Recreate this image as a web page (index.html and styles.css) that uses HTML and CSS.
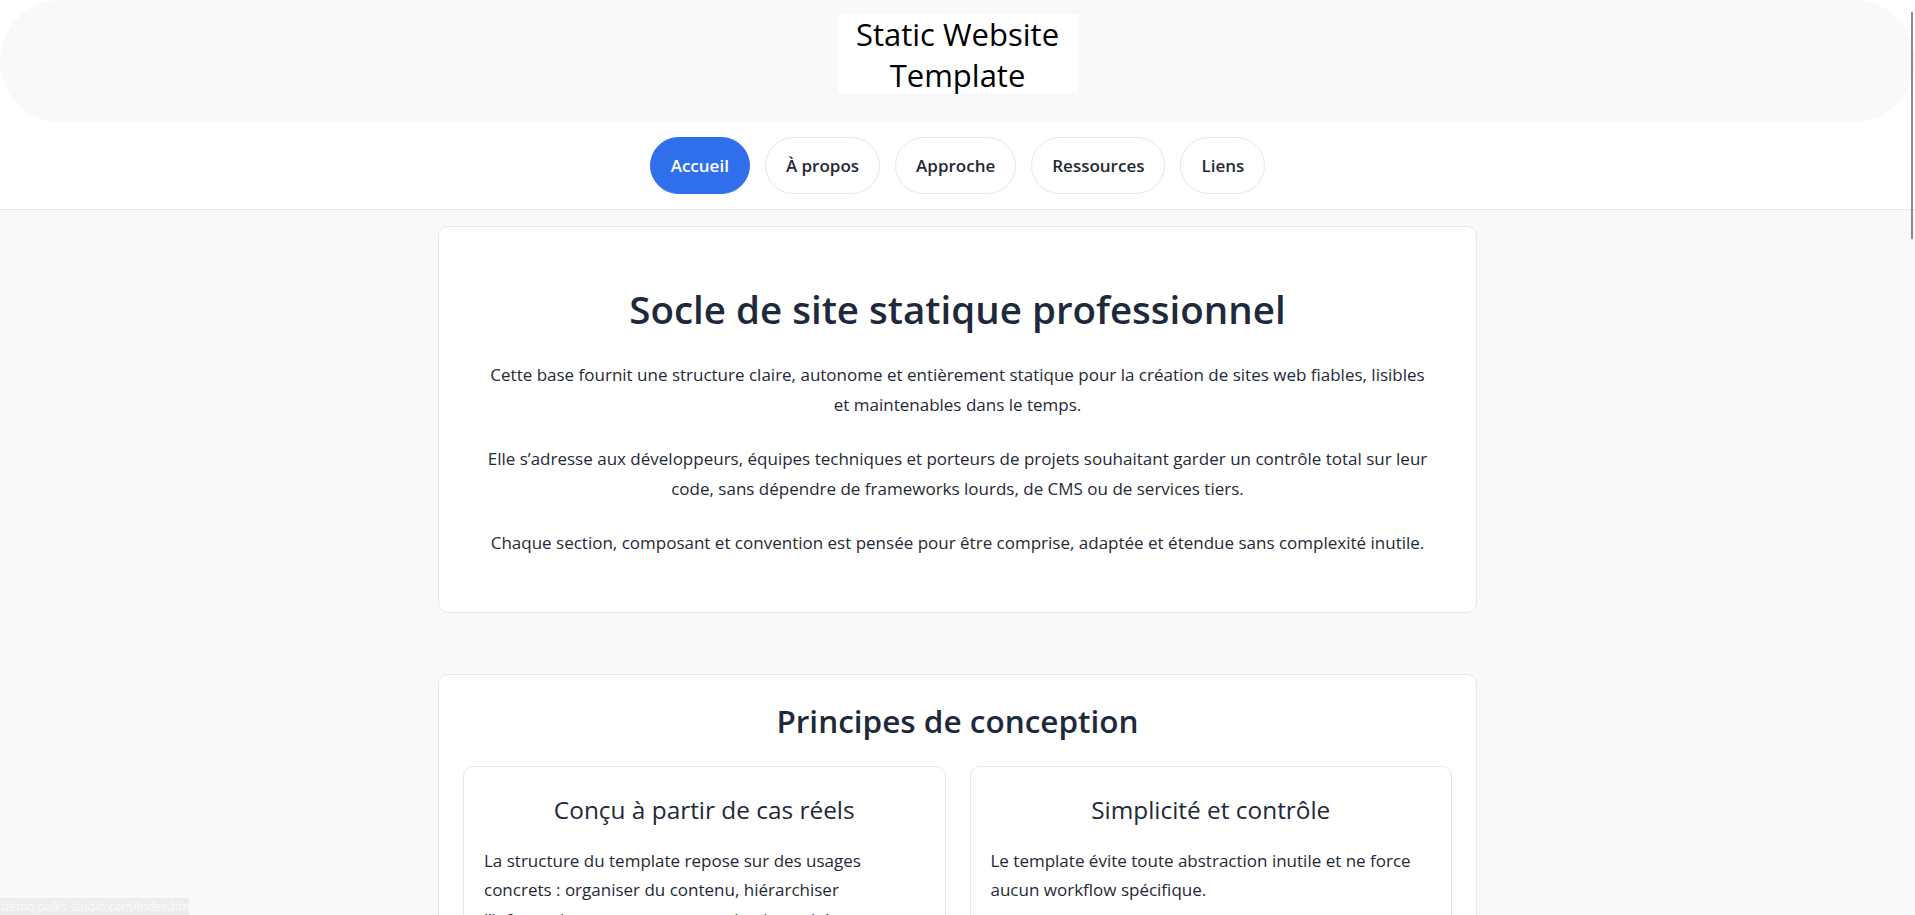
FILE: index.html
```html
<!DOCTYPE html>
<html lang="fr">
<head>
<meta charset="utf-8">
<title>Static Website Template</title>
<link rel="stylesheet" href="styles.css">
</head>
<body>
<header class="site-header">
  <div class="banner">
    <a class="brand" href="#">Static Website Template</a>
  </div>
  <nav class="nav">
    <a class="pill active" href="#">Accueil</a>
    <a class="pill" href="#">À propos</a>
    <a class="pill" href="#">Approche</a>
    <a class="pill" href="#">Ressources</a>
    <a class="pill" href="#">Liens</a>
  </nav>
</header>
<main class="main">
  <section class="card hero">
    <h1>Socle de site statique professionnel</h1>
    <p>Cette base fournit une structure claire, autonome et entièrement statique pour la création de sites web fiables, lisibles et maintenables dans le temps.</p>
    <p>Elle s’adresse aux développeurs, équipes techniques et porteurs de projets souhaitant garder un contrôle total sur leur code, sans dépendre de frameworks lourds, de CMS ou de services tiers.</p>
    <p>Chaque section, composant et convention est pensée pour être comprise, adaptée et étendue sans complexité inutile.</p>
  </section>
  <section class="card principles">
    <h2>Principes de conception</h2>
    <div class="grid">
      <article class="item">
        <h3>Conçu à partir de cas réels</h3>
        <p>La structure du template repose sur des usages concrets : organiser du contenu, hiérarchiser l’information, proposer une navigation cohérente et durable.</p>
      </article>
      <article class="item">
        <h3>Simplicité et contrôle</h3>
        <p>Le template évite toute abstraction inutile et ne force aucun workflow spécifique.</p>
        <p>Chaque fichier reste lisible, modifiable et compréhensible sans outil externe.</p>
      </article>
    </div>
  </section>
</main>
<div class="status">demo.palks-studio.com/index.html</div>
<div class="scroll-thumb"></div>
</body>
</html>
```
FILE: styles.css
```css
html {
  scrollbar-width: none;
}
html::-webkit-scrollbar {
  display: none;
}
body {
  margin: 0;
  background: #f8f9fb;
  color: #1f2937;
  font-family: "Open Sans", "Noto Sans", sans-serif;
}
.site-header {
  background: #ffffff;
  border-bottom: 1px solid #e5e7eb;
}
.banner {
  height: 122px;
  background: #f8f9fb;
  border-radius: 61px;
  display: flex;
  justify-content: center;
  align-items: flex-start;
  padding-top: 14px;
  box-sizing: border-box;
}
.brand {
  display: block;
  width: 240px;
  height: 79px;
  background: #ffffff;
  color: #000000;
  text-decoration: none;
  text-align: center;
  font-size: 31px;
  line-height: 41px;
}
.nav {
  display: flex;
  justify-content: center;
  gap: 15px;
  padding: 15px 0;
}
.pill {
  display: block;
  padding: 14px 20px;
  border: 1px solid #e5e7eb;
  border-radius: 999px;
  background: #ffffff;
  color: #1f2937;
  font-weight: 600;
  font-size: 17px;
  line-height: 27px;
  text-decoration: none;
}
.pill.active {
  background: #2f6feb;
  border-color: #2f6feb;
  color: #ffffff;
}
.main {
  padding: 16px 0 60px;
  display: flex;
  flex-direction: column;
  align-items: center;
  gap: 61px;
}
.card {
  width: 1039px;
  box-sizing: border-box;
  background: #ffffff;
  border: 1px solid #e5e7eb;
  border-radius: 10px;
}
.hero {
  padding: 58px 48px 54px;
  text-align: center;
}
h1 {
  margin: 0 0 27px;
  font-size: 38.5px;
  line-height: 48px;
  font-weight: 600;
  color: #1e293b;
}
p {
  font-size: 17px;
  line-height: 29.5px;
  margin: 0 0 25px;
}
.hero p:last-child,
.item p:last-child {
  margin-bottom: 0;
}
.principles {
  padding: 25px 24px 24px;
}
h2 {
  margin: 0 0 24px;
  text-align: center;
  font-size: 31.5px;
  line-height: 42px;
  font-weight: 600;
  color: #1e293b;
}
.grid {
  display: grid;
  grid-template-columns: 1fr 1fr;
  gap: 24px;
}
.item {
  border: 1px solid #e5e7eb;
  border-radius: 10px;
  padding: 26px 20px 24px;
}
h3 {
  margin: 0 0 20px;
  text-align: center;
  font-size: 24.4px;
  line-height: 33px;
  font-weight: 400;
  color: #1e293b;
}
.item p {
  text-align: left;
  margin-bottom: 16px;
}
.status {
  position: fixed;
  left: 0;
  bottom: 0;
  width: 189px;
  height: 17px;
  background: #ededee;
  color: #fafafa;
  font-size: 12px;
  line-height: 17px;
  padding-left: 2px;
  box-sizing: border-box;
  white-space: nowrap;
  overflow: hidden;
}
.scroll-thumb {
  position: fixed;
  top: 12px;
  right: 2px;
  width: 2px;
  height: 227px;
  background: #8a8a8a;
}
```
